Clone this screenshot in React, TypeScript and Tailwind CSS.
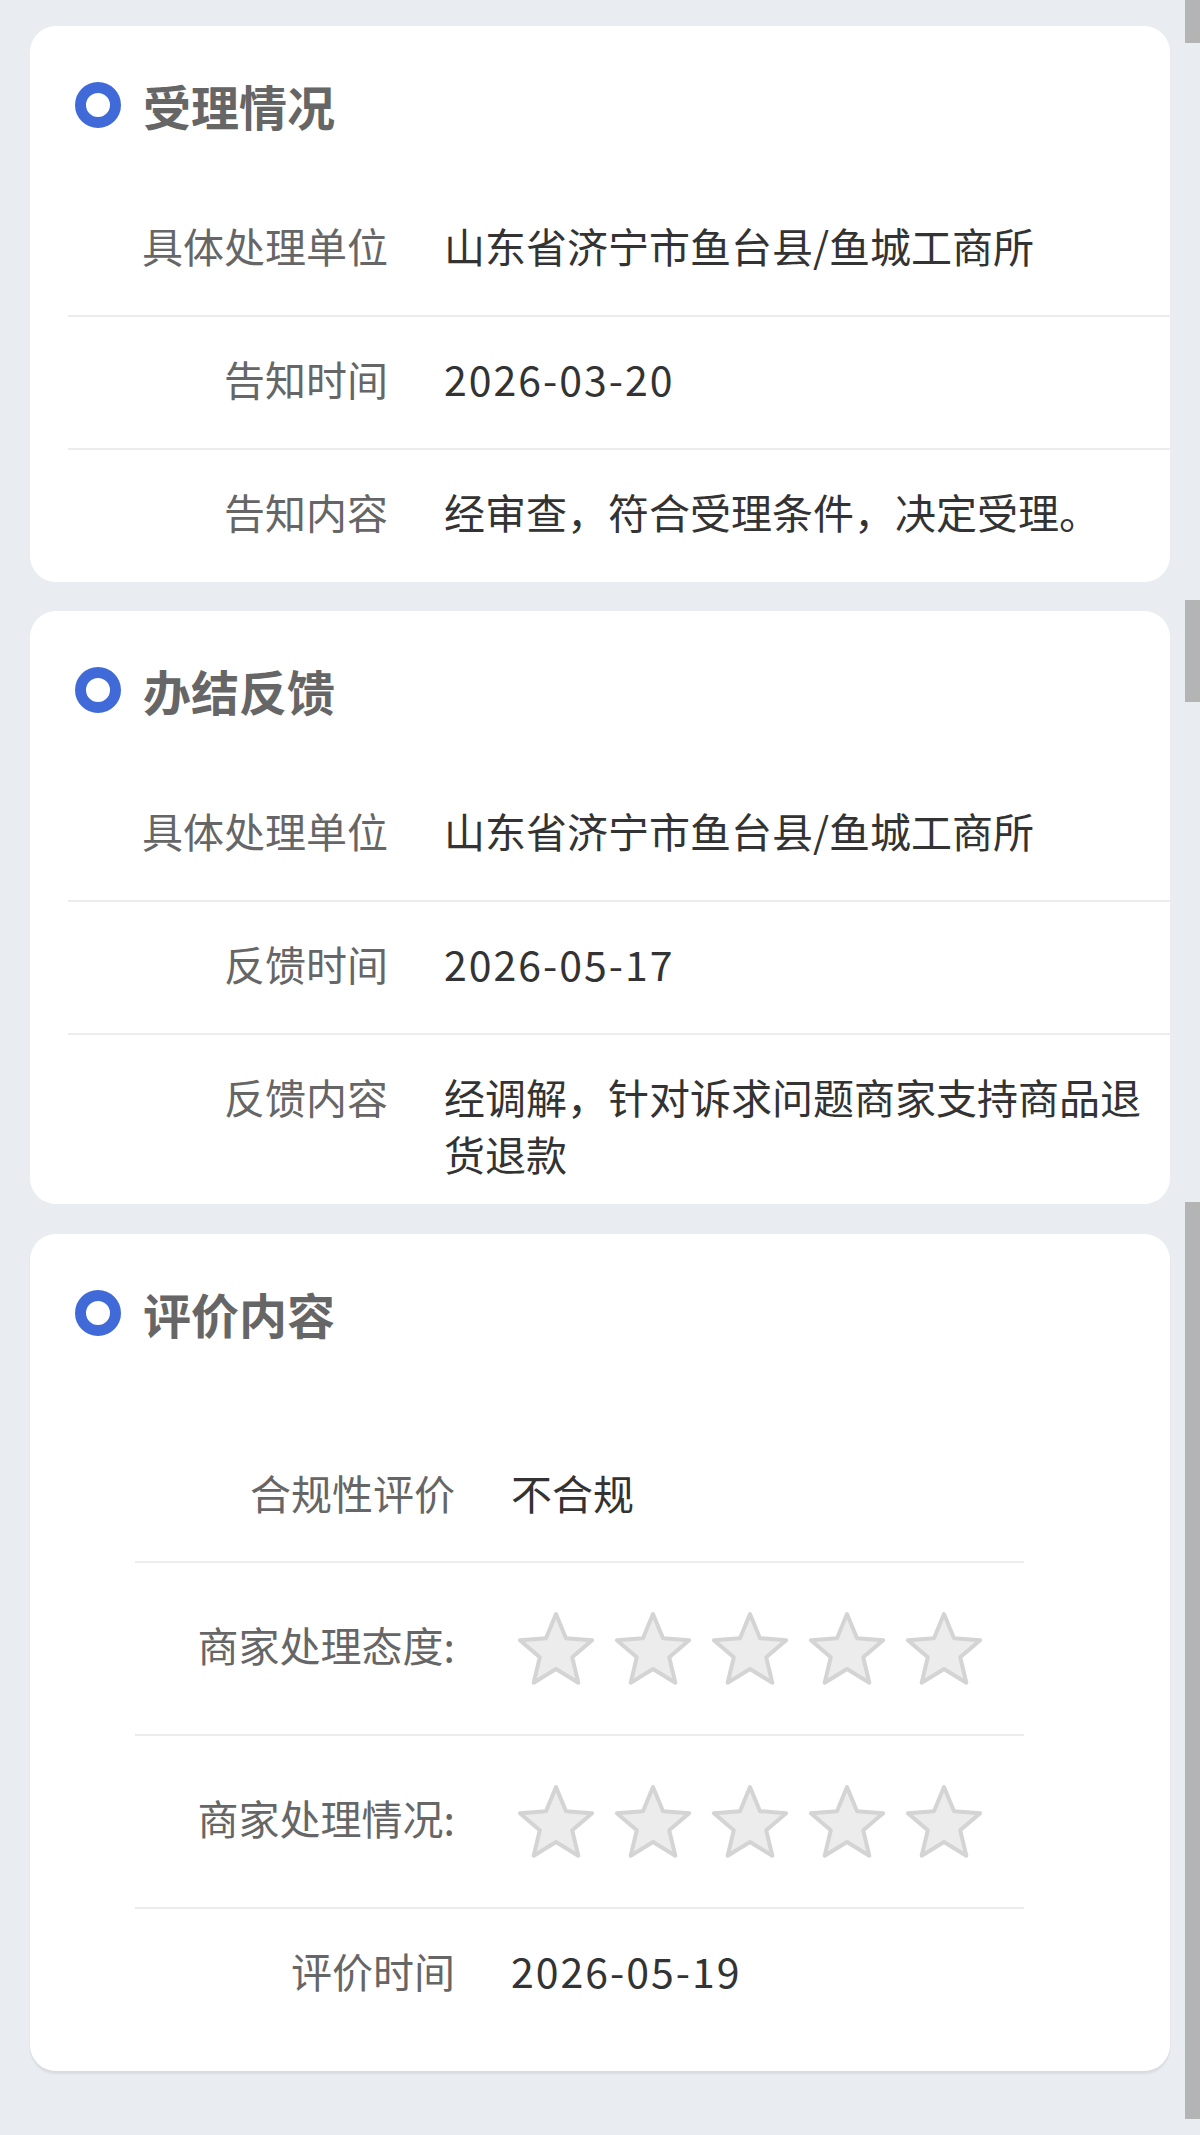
import type { ReactNode } from "react";

const FONT = { fontFamily: '"Noto Sans CJK SC", "Noto Sans", sans-serif' };

interface Fila {
  etiqueta: string;
  valor: ReactNode;
  extra?: string;
}

function Fecha({ texto }: { texto: string }) {
  return <span className="tracking-[2px]">{texto}</span>;
}

function Titulo({ texto }: { texto: string }) {
  return (
    <div className="h-[158px] flex items-center pl-[45px]">
      <span className="w-[46px] h-[46px] rounded-full border-[11px] border-[#3f6ad8] box-border" />
      <h2 className="ml-[22px] text-[48px] leading-none font-bold text-[#666666]">{texto}</h2>
    </div>
  );
}

function Estrella() {
  return (
    <svg width="80" height="76" viewBox="0 0 80 76">
      <polygon
        points="40,3 50,27.2 76.14,29.26 56.2,46.3 62.34,71.74 40,58 17.66,71.74 23.8,46.3 3.86,29.26 30,27.2"
        fill="#ececec"
        stroke="#d4d4d4"
        strokeWidth="4"
        strokeLinejoin="round"
      />
    </svg>
  );
}

function Estrellas() {
  return (
    <div className="flex items-center gap-[17px] ml-[5px]">
      {[0, 1, 2, 3, 4].map((i) => (
        <Estrella key={i} />
      ))}
    </div>
  );
}

function Tarjeta({ titulo, filas }: { titulo: string; filas: Fila[] }) {
  return (
    <section className="bg-white rounded-[26px] overflow-hidden">
      <Titulo texto={titulo} />
      <div className="ml-[38px]">
        {filas.map((fila, idx) => (
          <div
            key={fila.etiqueta}
            className={`flex items-start pt-[33px] ${fila.extra ?? "pb-[41px]"} ${idx < filas.length - 1 ? "border-b-2 border-[#ececec]" : ""}`}
          >
            <div className="w-[320px] shrink-0 text-right text-[41px] leading-[57px] text-[#666666]">
              {fila.etiqueta}
            </div>
            <div className="ml-[56px] pr-[24px] text-[41px] leading-[57px] text-[#333333]">{fila.valor}</div>
          </div>
        ))}
      </div>
    </section>
  );
}

export default function App() {
  const evaluacion = [
    { etiqueta: "合规性评价", valor: "不合规", alto: "h-[132px]", estrellas: false },
    { etiqueta: "商家处理态度:", valor: <Estrellas />, alto: "h-[173px]", estrellas: true },
    { etiqueta: "商家处理情况:", valor: <Estrellas />, alto: "h-[173px]", estrellas: true },
    { etiqueta: "评价时间", valor: <Fecha texto="2026-05-19" />, alto: "h-[131px]", estrellas: false },
  ];

  return (
    <div className="relative min-h-[2135px] bg-[#e9ecf0] pt-[26px] pl-[30px] pr-[30px]" style={FONT}>
      <div className="flex flex-col gap-[29px]">
        <Tarjeta
          titulo="受理情况"
          filas={[
            { etiqueta: "具体处理单位", valor: "山东省济宁市鱼台县/鱼城工商所" },
            { etiqueta: "告知时间", valor: <Fecha texto="2026-03-20" /> },
            { etiqueta: "告知内容", valor: "经审查，符合受理条件，决定受理。", extra: "pb-[42px]" },
          ]}
        />
        <Tarjeta
          titulo="办结反馈"
          filas={[
            { etiqueta: "具体处理单位", valor: "山东省济宁市鱼台县/鱼城工商所" },
            { etiqueta: "反馈时间", valor: <Fecha texto="2026-05-17" /> },
            { etiqueta: "反馈内容", valor: "经调解，针对诉求问题商家支持商品退货退款", extra: "pb-[22px]" },
          ]}
        />
        <section className="bg-white rounded-[26px] overflow-hidden shadow-[0_3px_2px_rgba(0,0,0,0.07)] mt-[1px]">
          <Titulo texto="评价内容" />
          <div className="ml-[105px] mr-[146px] mt-[39px] pb-[31px]">
            {evaluacion.map((fila, idx) => (
              <div
                key={fila.etiqueta}
                className={`flex items-center ${fila.alto} ${idx < evaluacion.length - 1 ? "border-b-2 border-[#ececec]" : ""}`}
              >
                <div className="w-[320px] shrink-0 pb-[8px] text-right text-[41px] leading-[57px] text-[#666666]">
                  {fila.etiqueta}
                </div>
                <div
                  className={`ml-[56px] text-[41px] leading-[57px] text-[#333333] ${fila.estrellas ? "" : "pb-[8px]"}`}
                >
                  {fila.valor}
                </div>
              </div>
            ))}
          </div>
        </section>
      </div>

      {/* barras de desplazamiento capturadas */}
      <div className="absolute right-0 top-0 w-[15px] h-[43px] bg-[#b4b4b4]" />
      <div className="absolute right-0 top-[600px] w-[15px] h-[102px] bg-[#b4b4b4]" />
      <div className="absolute right-0 top-[1202px] w-[15px] h-[917px] bg-[#b4b4b4]" />
    </div>
  );
}
